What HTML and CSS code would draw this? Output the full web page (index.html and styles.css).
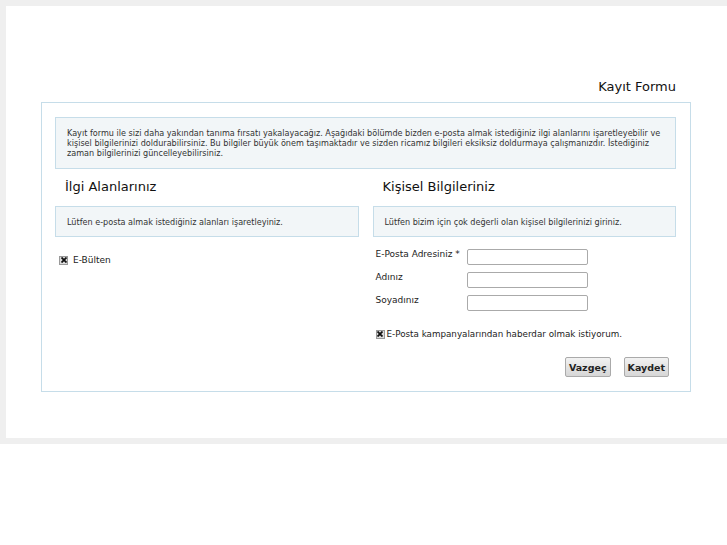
FILE: index.html
```html
<!DOCTYPE html>
<html lang="tr">
<head>
    <meta charset="UTF-8">
    <title>Kayıt Formu</title>
    <link rel="stylesheet" href="styles.css">
</head>
<body>
    <div class="page">
        <div class="content">
            <h1 class="title">Kayıt Formu</h1>

            <div class="form-box">
                <div class="note intro">
                    Kayıt formu ile sizi daha yakından tanıma fırsatı yakalayacağız. Aşağıdaki bölümde bizden e-posta almak istediğiniz ilgi alanlarını işaretleyebilir ve<br>
                    kişisel bilgilerinizi doldurabilirsiniz. Bu bilgiler büyük önem taşımaktadır ve sizden ricamız bilgileri eksiksiz doldurmaya çalışmanızdır. İstediğiniz<br>
                    zaman bilgilerinizi güncelleyebilirsiniz.
                </div>

                <div class="columns">
                    <div class="col">
                        <h2>İlgi Alanlarınız</h2>
                        <div class="note">Lütfen e-posta almak istediğiniz alanları işaretleyiniz.</div>
                        <label class="check interest">
                            <span class="box"><svg width="6" height="6" viewBox="0 0 6 6"><path d="M0.5 0.5 L5.5 5.5 M5.5 0.5 L0.5 5.5" stroke="#111" stroke-width="1.8"/></svg></span>
                            E-Bülten
                        </label>
                    </div>

                    <div class="col">
                        <h2>Kişisel Bilgileriniz</h2>
                        <div class="note">Lütfen bizim için çok değerli olan kişisel bilgilerinizi giriniz.</div>
                        <div class="fields">
                            <div class="row">
                                <span class="lbl">E-Posta Adresiniz *</span>
                                <input type="text" class="inp">
                            </div>
                            <div class="row">
                                <span class="lbl">Adınız</span>
                                <input type="text" class="inp">
                            </div>
                            <div class="row">
                                <span class="lbl">Soyadınız</span>
                                <input type="text" class="inp">
                            </div>
                        </div>
                        <label class="check campaign">
                            <span class="box"><svg width="6" height="6" viewBox="0 0 6 6"><path d="M0.5 0.5 L5.5 5.5 M5.5 0.5 L0.5 5.5" stroke="#111" stroke-width="1.8"/></svg></span>
                            E-Posta kampanyalarından haberdar olmak istiyorum.
                        </label>
                        <div class="actions">
                            <button>Vazgeç</button>
                            <button>Kaydet</button>
                        </div>
                    </div>
                </div>
            </div>
        </div>
    </div>
</body>
</html>
```

FILE: styles.css
```css
body {
    margin: 0;
    background: #fff;
    font-family: "DejaVu Sans", Verdana, sans-serif;
    color: #222;
}
.page {
    background: #efefef;
    padding: 6px 0 6px 6px;
}
.content {
    background: #fff;
    height: 432px;
    padding: 0 36px 0 35px;
    box-sizing: border-box;
    overflow: hidden;
}
.title {
    margin: 0;
    padding-top: 73px;
    padding-right: 15px;
    text-align: right;
    font-size: 13px;
    font-weight: normal;
    line-height: 15px;
    color: #111;
    height: 23px;
}
.form-box {
    border: 1px solid #c6dde9;
    padding: 14px 14px 14px 13px;
}
.note {
    background: #f2f6f8;
    border: 1px solid #c6dde9;
    font-size: 8.1px;
    line-height: 10px;
    color: #333;
    padding: 10px 11px;
    white-space: nowrap;
}
.columns {
    display: grid;
    grid-template-columns: 1fr 1fr;
    column-gap: 14px;
}
.col h2 {
    margin: 0;
    padding: 10px 0 0 10px;
    height: 27px;
    font-size: 13px;
    font-weight: normal;
    line-height: 16px;
    color: #111;
}
.col .note {
    height: 9px;
}
.check {
    display: flex;
    align-items: center;
    font-size: 9px;
    color: #222;
}
.box {
    width: 7px;
    height: 7px;
    border: 1px solid #999;
    background: #ddd;
    display: inline-flex;
    align-items: center;
    justify-content: center;
    margin-right: 5px;
}
.interest {
    margin: 18px 0 0 4px;
}
.fields {
    padding: 12px 0 0 3px;
}
.row {
    display: flex;
    align-items: flex-start;
    height: 23px;
}
.lbl {
    width: 91px;
    font-size: 9px;
    line-height: 10px;
    color: #222;
}
.inp {
    width: 121px;
    height: 16px;
    box-sizing: border-box;
    border: 1px solid #aaa;
    border-radius: 2px;
    margin: 0;
    padding: 0;
}
.campaign {
    margin: 11px 0 0 3px;
    font-size: 8.75px;
}
.campaign .box {
    margin-right: 2px;
}
.actions {
    display: flex;
    justify-content: flex-end;
    gap: 13px;
    margin: 18px 7px 0 0;
}
.actions button {
    font-family: "DejaVu Sans", Verdana, sans-serif;
    font-size: 9.5px;
    font-weight: bold;
    color: #222;
    height: 20px;
    padding: 0 3px;
    border: 1px solid #aaa;
    border-radius: 2px;
    background: linear-gradient(#f2f2f2, #d6d6d6);
}
```
